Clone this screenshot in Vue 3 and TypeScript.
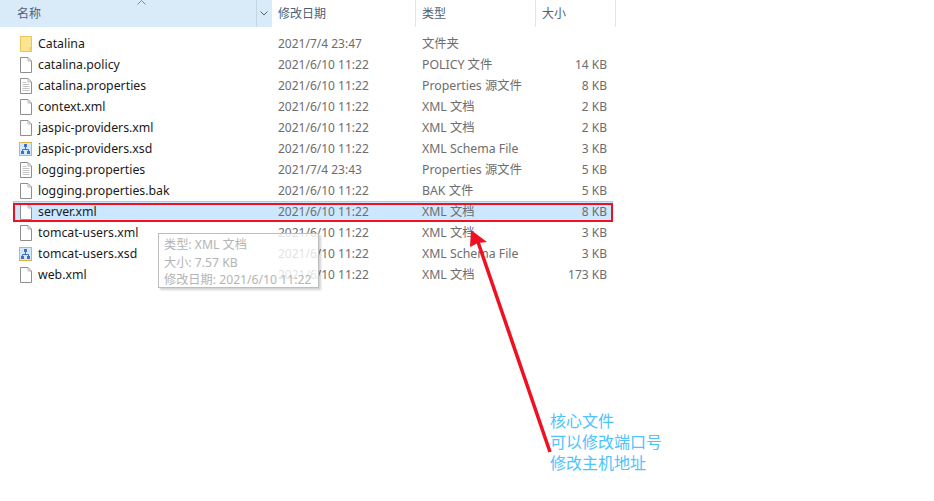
<script setup lang="ts">
type Kind = 'folder' | 'blank' | 'text' | 'schema'
interface FileRow { name: string; date: string; type: string; size: string; kind: Kind; selected?: boolean }
const rows: FileRow[] = [
  { name: 'Catalina', date: '2021/7/4 23:47', type: '文件夹', size: '', kind: 'folder' },
  { name: 'catalina.policy', date: '2021/6/10 11:22', type: 'POLICY 文件', size: '14 KB', kind: 'blank' },
  { name: 'catalina.properties', date: '2021/6/10 11:22', type: 'Properties 源文件', size: '8 KB', kind: 'text' },
  { name: 'context.xml', date: '2021/6/10 11:22', type: 'XML 文档', size: '2 KB', kind: 'blank' },
  { name: 'jaspic-providers.xml', date: '2021/6/10 11:22', type: 'XML 文档', size: '2 KB', kind: 'blank' },
  { name: 'jaspic-providers.xsd', date: '2021/6/10 11:22', type: 'XML Schema File', size: '3 KB', kind: 'schema' },
  { name: 'logging.properties', date: '2021/7/4 23:43', type: 'Properties 源文件', size: '5 KB', kind: 'text' },
  { name: 'logging.properties.bak', date: '2021/6/10 11:22', type: 'BAK 文件', size: '5 KB', kind: 'blank' },
  { name: 'server.xml', date: '2021/6/10 11:22', type: 'XML 文档', size: '8 KB', kind: 'blank', selected: true },
  { name: 'tomcat-users.xml', date: '2021/6/10 11:22', type: 'XML 文档', size: '3 KB', kind: 'blank' },
  { name: 'tomcat-users.xsd', date: '2021/6/10 11:22', type: 'XML Schema File', size: '3 KB', kind: 'schema' },
  { name: 'web.xml', date: '2021/6/10 11:22', type: 'XML 文档', size: '173 KB', kind: 'blank' },
]
</script>

<template>
  <div class="page">
    <div class="header">
      <div class="h-name">
        <span>名称</span>
        <svg class="sort" width="9" height="5" viewBox="0 0 9 5"><path d="M.5 4.5 4.5.5l4 4" fill="none" stroke="#7f8a94" /></svg>
      </div>
      <div class="h-drop">
        <svg width="8" height="5" viewBox="0 0 8 5"><path d="M.5.5 4 4 7.5.5" fill="none" stroke="#56646f" /></svg>
      </div>
      <div class="h-date">修改日期</div>
      <div class="h-type">类型</div>
      <div class="h-size">大小</div>
    </div>

    <div class="list">
      <div v-for="r in rows" :key="r.name" class="row" :class="{ selected: r.selected }">
        <div class="c-name">
          <svg class="icon" width="16" height="16" viewBox="0 0 16 16">
            <template v-if="r.kind === 'folder'">
              <path d="M2.500 .5h11v15h-11z" fill="#fde58f" stroke="#e9c65c" />
              <path d="M12 15.500v-4h1.500" fill="none" stroke="#e9c65c" />
            </template>
            <template v-else-if="r.kind === 'schema'">
              <rect x="1" y="1" width="13" height="14" fill="#e3b341" />
              <rect x="2" y="2" width="11" height="12" fill="#d6e8f7" />
              <rect x="6" y="3" width="3" height="3" fill="#3f72c4" />
              <rect x="3" y="10" width="3" height="3" fill="#3f72c4" />
              <rect x="9" y="10" width="3" height="3" fill="#3f72c4" />
              <path d="M7.500 6v2M4.500 10V8.500h6V10" fill="none" stroke="#3f72c4" />
            </template>
            <template v-else>
              <path d="M2.500 .5h7.500l3.500 3.500v11.500h-11z" fill="#fff" stroke="#8e8e8e" />
              <path d="M10 .5v3.500h3.500" fill="none" stroke="#b5b5b5" />
              <path v-if="r.kind === 'text'" stroke="#c4c4c4" d="M4.500 4.500h4M4.500 6.500h7M4.500 8.500h7M4.500 10.500h7M4.500 12.500h7" />
            </template>
          </svg>
          <span>{{ r.name }}</span>
        </div>
        <div class="c-date">{{ r.date }}</div>
        <div class="c-type">{{ r.type }}</div>
        <div class="c-size">{{ r.size }}</div>
      </div>
    </div>

    <div class="tooltip">
      <div>类型: XML 文档</div>
      <div>大小: 7.57 KB</div>
      <div>修改日期: 2021/6/10 11:22</div>
    </div>

    <svg class="overlay" width="934" height="501" viewBox="0 0 934 501">
      <rect x="14" y="204" width="598" height="17" fill="none" stroke="#ee1122" stroke-width="2" />
      <path d="M550 452 478 242" stroke="#ee1122" stroke-width="3.500" fill="none" />
      <path d="M471 230 470 247 478 243 487 242z" fill="#ee1122" />
    </svg>

    <div class="note">
      <div>核心文件</div>
      <div>可以修改端口号</div>
      <div>修改主机地址</div>
    </div>
  </div>
</template>

<style scoped>
.page {
  position: relative;
  width: 934px;
  height: 501px;
  overflow: hidden;
  background: #fff;
  font-family: "Noto Sans", "Noto Sans CJK SC", sans-serif;
  font-size: 12px;
  color: #1a1a1a;
}
.header {
  display: flex;
  height: 27px;
  line-height: 27px;
  color: #4c607a;
}
.h-name {
  position: relative;
  box-sizing: border-box;
  width: 257px;
  padding-left: 17px;
  background: #d9ebf9;
  border-right: 1px solid #c4d6e4;
}
.sort {
  position: absolute;
  left: 137px;
  top: 0;
}
.h-drop {
  box-sizing: border-box;
  width: 15px;
  padding-left: 3px;
  background: #d9ebf9;
  display: flex;
  align-items: center;
}
.h-date,
.h-type,
.h-size {
  box-sizing: border-box;
  border-right: 1px solid #e5e5e5;
}
.h-date { width: 144px; padding-left: 6px; }
.h-type { width: 120px; padding-left: 6px; }
.h-size { width: 80px; padding-left: 6px; }
.list {
  padding: 6px 0 0 13px;
}
.row {
  display: flex;
  box-sizing: border-box;
  width: 600px;
  height: 21px;
  line-height: 21px;
  color: #6d6d6d;
}
.row.selected {
  background: #cce8ff;
  box-shadow: inset 0 0 0 1px #99d1ff;
}
.c-name {
  display: flex;
  align-items: center;
  width: 265px;
  padding-left: 5px;
  box-sizing: border-box;
  color: #1a1a1a;
  font-size: 12.300px;
}
.icon { margin-right: 4px; flex: none; }
.c-date { width: 144px; }
.c-type { width: 120px; font-size: 12.300px; }
.c-size { width: 65px; text-align: right; }
.tooltip {
  position: absolute;
  left: 158px;
  top: 233px;
  box-sizing: border-box;
  width: 161px;
  height: 55px;
  padding: 2px 5px;
  line-height: 17.500px;
  font-size: 12.200px;
  color: #b4b4b4;
  background: rgba(255, 255, 255, 0.8);
  border: 1px solid #bdbdbd;
  box-shadow: 2px 2px 2px rgba(0, 0, 0, 0.18);
}
.overlay {
  position: absolute;
  left: 0;
  top: 0;
  pointer-events: none;
}
.note {
  position: absolute;
  left: 550px;
  top: 411px;
  font-size: 16px;
  line-height: 21px;
  color: #4dc3ff;
}
</style>
